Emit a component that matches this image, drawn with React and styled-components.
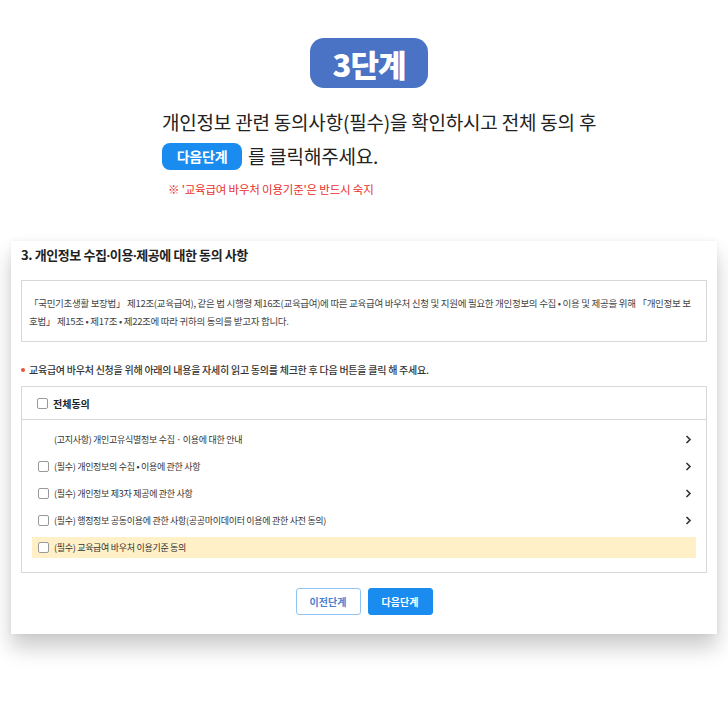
import * as React from "react"
import styled, { createGlobalStyle } from 'styled-components'

const GlobalStyle = createGlobalStyle`
  body {
    margin: 0;
    background: #fff;
    font-family: "Noto Sans CJK KR", "Noto Sans", sans-serif;
    color: #222;
  }
`

const Page = styled.div`
  width: 728px;
  height: 722px;
  padding-top: 38px;
  box-sizing: border-box;
`

const StepBadge = styled.div`
  margin: 0 auto 0 310px;
  width: 118px;
  height: 50px;
  border-radius: 14px;
  background: #4a72c5;
  color: #fff;
  font-size: 31px;
  font-weight: 900;
  letter-spacing: -1px;
  display: flex;
  align-items: center;
  justify-content: center;
`

const Intro = styled.div`
  margin: 18px 0 0 162px;
`

const IntroLine = styled.div`
  display: flex;
  align-items: center;
  gap: 6px;
  font-size: 19px;
  line-height: 28px;
  height: ${p => p.$h || 28}px;
  color: #222;
  letter-spacing: -0.2px;
`

const Pill = styled.span`
  display: inline-flex;
  align-items: center;
  justify-content: center;
  width: 80px;
  height: 27px;
  border-radius: 8px;
  background: #1a8cf0;
  color: #fff;
  font-size: 14px;
  font-weight: 700;
`

const Note = styled.div`
  margin: 7px 0 0 6px;
  font-size: 11.5px;
  color: #e8302c;
  letter-spacing: -0.2px;
`

const Card = styled.div`
  margin: 44px 11px 0;
  height: 393px;
  background: #fff;
  box-shadow: 0 14px 20px rgba(0, 0, 0, 0.2), 0 0 6px rgba(0, 0, 0, 0.06);
  padding: 4px 10px 0;
  box-sizing: border-box;
`

const Title = styled.h2`
  margin: 0;
  font-size: 13px;
  font-weight: 700;
  line-height: 20px;
  color: #222;
  letter-spacing: -0.4px;
`

const Dot = styled.span`
  font-family: "Noto Sans", sans-serif;
`

const Notice = styled.div`
  margin-top: 15px;
  border: 1px solid #d8d8d8;
  padding: 13px 14px 12px 7px;
  height: 62px;
  box-sizing: border-box;
  font-size: 9.5px;
  line-height: 18px;
  color: #444;
  letter-spacing: -0.3px;
  word-break: break-all;
`

const Guide = styled.div`
  margin-top: 20px;
  display: flex;
  align-items: center;
  gap: 4px;
  font-size: 10px;
  font-weight: 500;
  color: #333;
  letter-spacing: -0.25px;
  &::before {
    content: "";
    width: 4px;
    height: 4px;
    border-radius: 50%;
    background: #f0503c;
  }
`

const AgreeBox = styled.div`
  margin-top: 9px;
  border: 1px solid #d8d8d8;
  height: 187px;
  box-sizing: border-box;
`

const AllRow = styled.label`
  display: flex;
  align-items: center;
  height: 32px;
  padding-left: 15px;
  border-bottom: 1px solid #d8d8d8;
  font-size: 10px;
  font-weight: 700;
  color: #222;
`

const List = styled.div`
  padding: 6px 10px 0 10px;
`

const Row = styled.div`
  display: flex;
  align-items: center;
  height: ${p => (p.$hl ? 21 : 27)}px;
  margin-top: ${p => (p.$hl ? 3 : 0)}px;
  padding: 0 4px 0 6px;
  background: ${p => (p.$hl ? '#fff0c8' : 'transparent')};
  font-size: 9px;
  color: #333;
  letter-spacing: -0.3px;
`

const Box = styled.span`
  width: 9px;
  height: 9px;
  border: 1px solid #999;
  border-radius: 2px;
  background: #fff;
  flex: none;
  margin-right: 5px;
`

const Spacer = styled.span`
  width: 16px;
  flex: none;
`

const RowText = styled.span`
  flex: 1;
`

const Chevron = () => (
  <svg width="7" height="9" viewBox="0 0 7 9">
    <path d="M1.5 1 L5 4.5 L1.5 8" fill="none" stroke="#333" strokeWidth="1.6" />
  </svg>
)

const Buttons = styled.div`
  display: flex;
  justify-content: center;
  gap: 7px;
  margin-top: 15px;
`

const Btn = styled.button`
  width: 65px;
  height: 27px;
  border-radius: 3px;
  font-family: inherit;
  font-size: 10px;
  font-weight: 700;
  border: 1px solid ${p => (p.$primary ? '#1a8cf0' : '#8fc4f5')};
  background: ${p => (p.$primary ? '#1a8cf0' : '#fff')};
  color: ${p => (p.$primary ? '#fff' : '#4a7fd0')};
  padding: 0;
`

const items = [
  { text: '(고지사항) 개인고유식별정보 수집 · 이용에 대한 안내', check: false, arrow: true },
  { text: '(필수) 개인정보의 수집 • 이용에 관한 사항', check: true, arrow: true },
  { text: '(필수) 개인정보 제3자 제공에 관한 사항', check: true, arrow: true },
  { text: '(필수) 행정정보 공동이용에 관한 사항(공공마이데이터 이용에 관한 사전 동의)', check: true, arrow: true },
  { text: '(필수) 교육급여 바우처 이용기준 동의', check: true, arrow: false, hl: true },
]

const App = () => {
  return (
    <Page>
      <GlobalStyle />
      <StepBadge>3단계</StepBadge>
      <Intro>
        <IntroLine $h={32}>개인정보 관련 동의사항(필수)을 확인하시고 전체 동의 후</IntroLine>
        <IntroLine $h={36}>
          <Pill>다음단계</Pill> 를 클릭해주세요.
        </IntroLine>
        <Note>※ '교육급여 바우처 이용기준'은 반드시 숙지</Note>
      </Intro>
      <Card>
        <Title>
          3. 개인정보 수집<Dot>·</Dot>이용<Dot>·</Dot>제공에 대한 동의 사항
        </Title>
        <Notice>
          「국민기초생활 보장법」 제12조(교육급여), 같은 법 시행령 제16조(교육급여)에 따른 교육급여 바우처 신청 및 지원에 필요한 개인정보의 수집 • 이용 및 제공을 위해 「개인정보 보호법」 제15조 • 제17조 • 제22조에 따라 귀하의 동의를 받고자 합니다.
        </Notice>
        <Guide>교육급여 바우처 신청을 위해 아래의 내용을 자세히 읽고 동의를 체크한 후 다음 버튼을 클릭 해 주세요.</Guide>
        <AgreeBox>
          <AllRow>
            <Box />
            전체동의
          </AllRow>
          <List>
            {items.map(it => (
              <Row key={it.text} $hl={it.hl}>
                {it.check ? <Box /> : <Spacer />}
                <RowText>{it.text}</RowText>
                {it.arrow && <Chevron />}
              </Row>
            ))}
          </List>
        </AgreeBox>
        <Buttons>
          <Btn>이전단계</Btn>
          <Btn $primary>다음단계</Btn>
        </Buttons>
      </Card>
    </Page>
  )
}

export default App
